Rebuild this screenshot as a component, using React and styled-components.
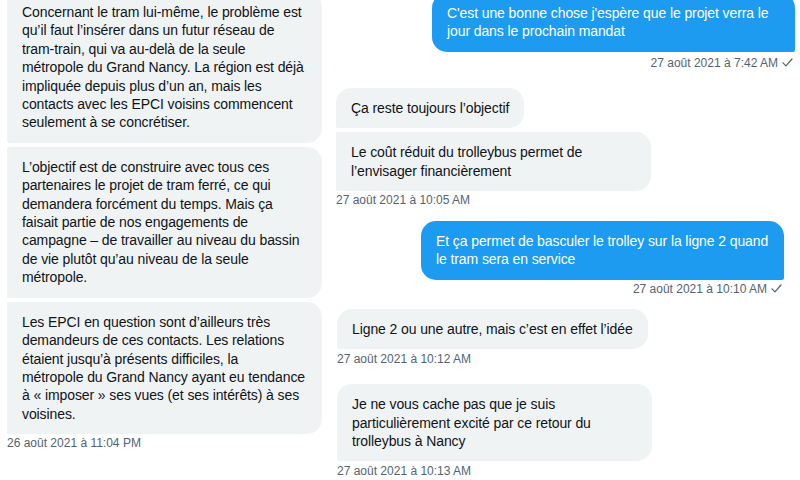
import React from 'react';
import styled, { createGlobalStyle } from 'styled-components';

const GlobalStyle = createGlobalStyle`
  html, body {
    margin: 0;
    padding: 0;
    background: #ffffff;
    overflow: hidden;
  }
  body {
    font-family: "Liberation Sans", Arial, sans-serif;
    color: #0f1419;
  }
`;

const Page = styled.div`
  width: 800px;
  height: 480px;
  overflow: hidden;
  display: grid;
  grid-template-columns: 330px 1fr;
`;

const LeftColumn = styled.div`
  display: flex;
  flex-direction: column;
  gap: 4px;
  padding: 0 8px 0 7px;
  margin-top: -8px;
`;

const RightColumn = styled.div`
  display: flex;
  flex-direction: column;
  padding: 0 5px 0 6px;
  margin-top: -7px;
`;

const Group = styled.div`
  display: flex;
  flex-direction: column;
  align-items: ${p => (p.$sent ? 'flex-end' : 'flex-start')};
  margin-top: ${p => p.$top || 0}px;
  margin-left: ${p => (p.$sent ? 0 : p.$shift || 0)}px;
  margin-right: ${p => (p.$sent ? p.$shift || 0 : 0)}px;
`;

const Stack = styled.div`
  display: flex;
  flex-direction: column;
  align-items: inherit;
  gap: 4px;
  width: 100%;
`;

const Bubble = styled.div`
  box-sizing: border-box;
  padding: 11px 15px;
  font-size: 14px;
  line-height: 18.4px;
  letter-spacing: -0.1px;
  white-space: pre-line;
  background: ${p => (p.$sent ? '#1d9bf0' : '#eff3f4')};
  color: ${p => (p.$sent ? '#ffffff' : '#0f1419')};
  max-width: ${p => p.$max}px;
  border-radius: ${p =>
    p.$sent
      ? '15px 15px 2px 15px'
      : `${p.$first ? 15 : 2}px 15px 15px 2px`};
`;

const Stamp = styled.div`
  display: flex;
  align-items: center;
  gap: 4px;
  font-size: 12px;
  line-height: 16px;
  color: #536471;
  margin-top: ${p => p.$top || 0}px;
  padding-right: ${p => (p.$sent ? 2 : 0)}px;
  white-space: nowrap;
`;

const Check = () => (
  <svg width="11" height="9" viewBox="0 0 11 9" fill="none">
    <path d="M1 4.8 L3.9 7.8 L10 1" stroke="#536471" strokeWidth="1.2" strokeLinecap="round" strokeLinejoin="round" />
  </svg>
);

const leftMessages = [
  'Concernant le tram lui-même, le problème est qu’il faut l’insérer dans un futur réseau de tram-train, qui va au-delà de la seule métropole du Grand Nancy. La région est déjà impliquée depuis plus d’un an, mais les contacts avec les EPCI voisins commencent seulement à se concrétiser.',
  'L’objectif est de construire avec tous ces partenaires le projet de tram ferré, ce qui demandera forcément du temps. Mais ça faisait partie de nos engagements de campagne – de travailler au niveau du bassin de vie plutôt qu’au niveau de la seule métropole.',
  'Les EPCI en question sont d’ailleurs très demandeurs de ces contacts. Les relations étaient jusqu’à présents difficiles, la\nmétropole du Grand Nancy ayant eu tendance à «\u00a0imposer\u00a0» ses vues (et ses intérêts) à ses voisines.',
];

const conversation = [
  {
    sent: true,
    top: 0,
    shift: 0,
    stampTop: 3,
    time: '27 août 2021 à 7:42 AM',
    texts: ['C\'est une bonne chose j\'espère que le projet verra le jour dans le prochain mandat'],
  },
  {
    sent: false,
    top: 17,
    shift: 0,
    stampTop: 1,
    time: '27 août 2021 à 10:05 AM',
    texts: ['Ça reste toujours l’objectif', 'Le coût réduit du trolleybus permet de l’envisager financièrement'],
  },
  {
    sent: true,
    top: 13,
    shift: 11,
    stampTop: 1,
    time: '27 août 2021 à 10:10 AM',
    texts: ['Et ça permet de basculer le trolley sur la ligne 2 quand le tram sera en service'],
  },
  {
    sent: false,
    top: 12,
    shift: 1,
    stampTop: 2,
    time: '27 août 2021 à 10:12 AM',
    texts: ['Ligne 2 ou une autre, mais c’est en effet l’idée'],
  },
  {
    sent: false,
    top: 17,
    shift: 1,
    stampTop: 2,
    time: '27 août 2021 à 10:13 AM',
    texts: ['Je ne vous cache pas que je suis particulièrement excité par ce retour du trolleybus à Nancy'],
  },
];

export default function App() {
  return (
    <>
      <GlobalStyle />
      <Page>
        <LeftColumn>
          {leftMessages.map((text, i) => (
            <Bubble key={i} $max={315} $first={false}>
              {text}
            </Bubble>
          ))}
          <Stamp $top={-3}>26 août 2021 à 11:04 PM</Stamp>
        </LeftColumn>
        <RightColumn>
          {conversation.map((group, i) => (
            <Group key={i} $sent={group.sent} $top={group.top} $shift={group.shift}>
              <Stack>
                {group.texts.map((text, j) => (
                  <Bubble key={j} $sent={group.sent} $first={j === 0} $max={group.sent ? 363 : 315}>
                    {text}
                  </Bubble>
                ))}
              </Stack>
              <Stamp $sent={group.sent} $top={group.stampTop}>
                {group.time}
                {group.sent && <Check />}
              </Stamp>
            </Group>
          ))}
        </RightColumn>
      </Page>
    </>
  );
}
